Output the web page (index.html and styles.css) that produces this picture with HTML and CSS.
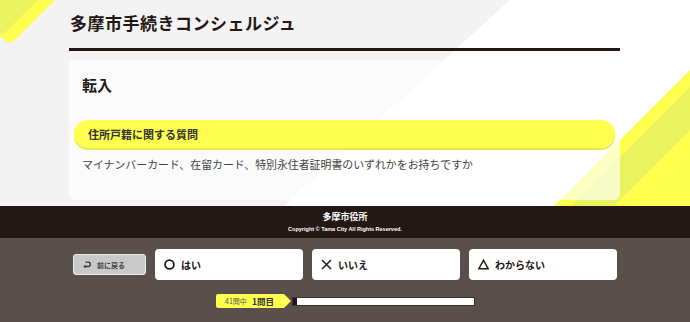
FILE: index.html
```html
<!DOCTYPE html>
<html lang="ja">
<head>
  <meta charset="UTF-8">
  <meta name="viewport" content="width=device-width, initial-scale=1.0">
  <title>多摩市手続きコンシェルジュ</title>
  <link rel="stylesheet" href="styles.css">
</head>
<body>
  <div class="top">
    <!-- 背景の斜めライン -->
    <svg class="deco" width="690" height="206" viewBox="0 0 690 206">
      <rect x="0" y="0" width="690" height="206" fill="#f3f3f3"/>
      <polygon points="510,0 690,0 690,206 284,206" fill="#ffffff"/>
      <polygon points="690,70 690,206 554,206" fill="#ffff50"/>
      <polygon points="690,87 690,130 614,206 571,206" fill="#e9f35d"/>
      <g transform="rotate(45)">
        <rect x="-100" y="-100" width="138.9" height="125.5" rx="7" fill="#ffff50"/>
        <rect x="-100" y="-100" width="126.9" height="125.5" rx="7" fill="#e9f35d"/>
      </g>
    </svg>
    <div class="inner">
      <h1 class="title">多摩市手続きコンシェルジュ</h1>
      <div class="card">
        <h2 class="card_title">転入</h2>
        <div class="category">住所戸籍に関する質問</div>
        <p class="question">マイナンバーカード、在留カード、特別永住者証明書のいずれかをお持ちですか</p>
      </div>
    </div>
  </div>

  <div class="footer">
    <div class="footer_name">多摩市役所</div>
    <div class="copyright">Copyright © Tama City All Rights Reserved.</div>
  </div>

  <div class="controls">
    <div class="answers">
      <button class="back_btn">
        <svg width="8" height="7" viewBox="0 0 8 7">
          <path d="M2.5 1.2 H5.2 A2 2 0 0 1 5.2 5.5 H1.2" fill="none" stroke="#333" stroke-width="1.3"/>
          <path d="M0.2 5.5 L2.6 3.9 L2.6 7 Z" fill="#333"/>
        </svg>
        <span>前に戻る</span>
      </button>
      <button class="answer_btn">
        <svg width="11" height="11" viewBox="0 0 11 11">
          <circle cx="5.5" cy="5.5" r="4.4" fill="none" stroke="#231815" stroke-width="1.8"/>
        </svg>
        <span>はい</span>
      </button>
      <button class="answer_btn">
        <svg width="11" height="11" viewBox="0 0 11 11">
          <path d="M1 1 L10 10 M10 1 L1 10" stroke="#231815" stroke-width="1.5"/>
        </svg>
        <span>いいえ</span>
      </button>
      <button class="answer_btn">
        <svg width="11" height="11" viewBox="0 0 11 11">
          <path d="M5.5 1.2 L10.2 9.8 H0.8 Z" fill="none" stroke="#231815" stroke-width="1.4" stroke-linejoin="miter"/>
        </svg>
        <span>わからない</span>
      </button>
    </div>
    <div class="progress">
      <div class="progress_tag">
        <span class="total">41問中</span>
        <span class="current">1問目</span>
      </div>
      <div class="progress_bar">
        <div class="progress_fill" style="width: 2.4%;"></div>
      </div>
    </div>
  </div>
</body>
</html>
```

FILE: styles.css
```css
body {
  margin: 0;
  width: 690px;
  font-family: 'Noto Sans CJK JP', 'Noto Sans', sans-serif;
  color: #231815;
}
.top {
  position: relative;
  height: 206px;
  overflow: hidden;
}
.deco {
  position: absolute;
  left: 0;
  top: 0;
}
.inner {
  position: relative;
  margin-left: 69px;
  width: 551px;
}
.title {
  margin: 0;
  padding: 11px 0 13px 1px;
  font-size: 17px;
  line-height: 24px;
  letter-spacing: 0.5px;
  font-weight: 700;
  border-bottom: 3px solid #231815;
}
.card {
  margin-top: 9px;
  height: 140px;
  box-sizing: border-box;
  padding: 15px 13px 0;
  border-radius: 6px;
  background-color: rgba(255, 255, 255, 0.65);
}
.card_title {
  margin: 0;
  font-size: 15px;
  line-height: 20px;
  font-weight: 700;
}
.category {
  margin: 25px -8px 0;
  height: 28px;
  padding-left: 14px;
  border-radius: 14px;
  background-color: #ffff50;
  box-shadow: 0 2px 0 #e4e955;
  font-size: 11px;
  line-height: 28px;
  font-weight: 700;
  color: #333;
}
.question {
  margin: 6px 0 0;
  font-size: 10.9px;
  line-height: 20px;
  color: #444;
}
.footer {
  height: 32px;
  box-sizing: border-box;
  padding-top: 5px;
  background-color: #231815;
  color: #fff;
  text-align: center;
}
.footer_name {
  font-size: 9px;
  line-height: 12px;
  font-weight: 700;
}
.copyright {
  margin-top: 2px;
  font-family: 'Liberation Sans', sans-serif;
  font-size: 5.5px;
  line-height: 8px;
  font-weight: 700;
}
.controls {
  height: 84px;
  box-sizing: border-box;
  padding-top: 11px;
  background-color: #594f4c;
}
.answers {
  display: flex;
  justify-content: center;
  align-items: center;
  gap: 9px;
}
.back_btn {
  display: flex;
  align-items: center;
  gap: 6px;
  width: 73px;
  height: 21px;
  padding: 0 0 0 9px;
  border: 1px solid #ececec;
  border-radius: 3px;
  background-color: #c9c9c9;
  font-family: inherit;
  font-size: 7px;
  font-weight: 700;
  color: #444;
}
.answer_btn {
  display: flex;
  align-items: center;
  gap: 6px;
  width: 148px;
  height: 31px;
  padding: 0 0 0 9px;
  border: none;
  border-radius: 4px;
  background-color: #fff;
  font-family: inherit;
  font-size: 10px;
  font-weight: 700;
  color: #231815;
}
.progress {
  display: flex;
  justify-content: center;
  align-items: center;
  margin-top: 14px;
}
.progress_tag {
  position: relative;
  display: flex;
  align-items: center;
  justify-content: center;
  gap: 5px;
  width: 68px;
  height: 14px;
  box-sizing: border-box;
  margin-right: 8px;
  border-radius: 2px 0 0 2px;
  background-color: #ffff50;
}
.progress_tag::after {
  content: "";
  position: absolute;
  right: -7px;
  top: 0;
  border-top: 7px solid transparent;
  border-bottom: 7px solid transparent;
  border-left: 7px solid #ffff50;
}
.total {
  font-size: 7px;
  color: #555;
}
.current {
  font-size: 8.5px;
  font-weight: 700;
  color: #333;
}
.progress_bar {
  width: 183px;
  height: 9px;
  box-sizing: border-box;
  border: 1px solid #3a302d;
  background-color: #fff;
}
.progress_fill {
  height: 100%;
  background-color: #231815;
}
```
